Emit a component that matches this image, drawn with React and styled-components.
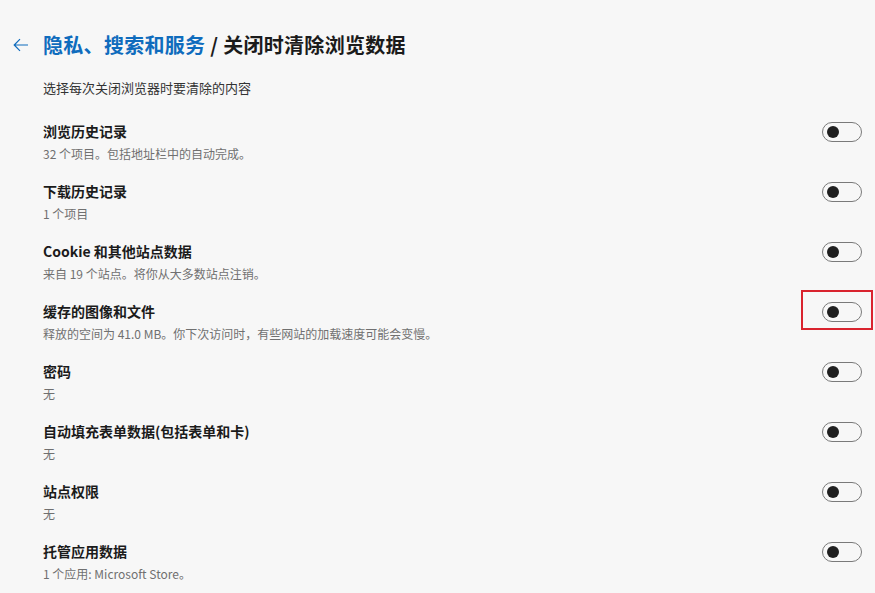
import React from "react";
import styled, { createGlobalStyle } from "styled-components";

const Global = createGlobalStyle`
  html, body { margin: 0; padding: 0; background: #f7f7f7; }
  body { font-family: "Noto Sans CJK SC", "Noto Sans", sans-serif; color: #1b1b1b; }
`;

const Page = styled.div`
  width: 875px;
  height: 593px;
  overflow: hidden;
  box-sizing: border-box;
  padding: 30px 13px 0 13px;
  position: relative;
`;

const Header = styled.div`
  display: flex;
  align-items: center;
  height: 30px;
  gap: 12px;
`;

const Back = styled.button`
  border: none;
  background: none;
  padding: 0;
  width: 18px;
  height: 30px;
  display: flex;
  align-items: center;
  color: #0f6cbd;
  cursor: pointer;
`;

const Title = styled.h1`
  margin: 0;
  font-size: 20px;
  font-weight: 700;
  line-height: 30px;
  letter-spacing: 0.3px;
  color: #1b1b1b;
`;

const Crumb = styled.span`
  color: #0f6cbd;
`;

const Intro = styled.p`
  margin: 18px 0 0 30px;
  font-size: 13px;
  line-height: 20px;
  color: #333;
`;

const List = styled.div`
  margin: 23px 0 0 30px;
  display: flex;
  flex-direction: column;
`;

const Row = styled.div`
  height: 60px;
  display: flex;
  align-items: flex-start;
  justify-content: space-between;
  position: relative;
`;

const Texts = styled.div`
  display: flex;
  flex-direction: column;
  gap: 4px;
`;

const RowTitle = styled.div`
  font-size: 14px;
  font-weight: 700;
  line-height: 20px;
  color: #1b1b1b;
`;

const RowSub = styled.div`
  font-size: 12px;
  line-height: 18px;
  color: #707070;
`;

const Toggle = styled.div`
  width: 40px;
  height: 20px;
  box-sizing: border-box;
  border: 1px solid #7a7a7a;
  border-radius: 10px;
  display: flex;
  align-items: center;
  padding-left: 4px;
  flex-shrink: 0;
  margin-top: 1px;
`;

const Knob = styled.span`
  width: 12px;
  height: 12px;
  border-radius: 50%;
  background: #1f1f1f;
`;

const Highlight = styled.div`
  position: absolute;
  right: -11px;
  top: -11px;
  width: 72px;
  height: 40px;
  box-sizing: border-box;
  border: 2px solid #d9232e;
  pointer-events: none;
`;

const items = [
  ["浏览历史记录", "32 个项目。包括地址栏中的自动完成。"],
  ["下载历史记录", "1 个项目"],
  ["Cookie 和其他站点数据", "来自 19 个站点。将你从大多数站点注销。"],
  ["缓存的图像和文件", "释放的空间为 41.0 MB。你下次访问时，有些网站的加载速度可能会变慢。", true],
  ["密码", "无"],
  ["自动填充表单数据(包括表单和卡)", "无"],
  ["站点权限", "无"],
  ["托管应用数据", "1 个应用: Microsoft Store。"],
];

export default function App() {
  return (
    <>
      <Global />
      <Page>
        <Header>
          <Back aria-label="返回">
            <svg width="16" height="14" viewBox="0 0 16 14" fill="none">
              <path d="M15 7H1.5M7 1.2L1.2 7L7 12.8" stroke="#0f6cbd" strokeWidth="1.2" />
            </svg>
          </Back>
          <Title>
            <Crumb>隐私、搜索和服务</Crumb> / 关闭时清除浏览数据
          </Title>
        </Header>
        <Intro>选择每次关闭浏览器时要清除的内容</Intro>
        <List>
          {items.map(([t, s, hl]) => (
            <Row key={t}>
              <Texts>
                <RowTitle>{t}</RowTitle>
                <RowSub>{s}</RowSub>
              </Texts>
              <Toggle>
                <Knob />
              </Toggle>
              {hl && <Highlight />}
            </Row>
          ))}
        </List>
      </Page>
    </>
  );
}
